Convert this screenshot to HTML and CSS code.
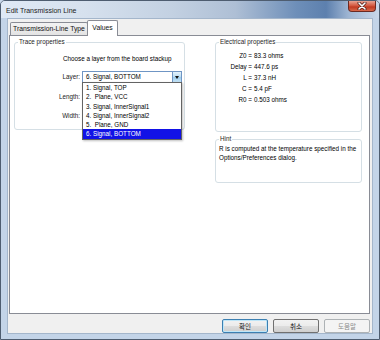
FILE: index.html
```html
<!DOCTYPE html>
<html lang="en">
<head>
  <meta charset="UTF-8" />
  <title>Edit Transmission Line</title>
  <link rel="stylesheet" href="styles.css">
</head>
<body>
  <div class="window">
    <div class="titlebar">
      <span class="title">Edit Transmission Line</span>
      <span class="close-btn">
        <svg width="10" height="8" viewBox="0 0 10 8">
          <path d="M2 1 L8 7 M8 1 L2 7" stroke="#4a1a14" stroke-width="3" stroke-linecap="round"/>
          <path d="M2 1 L8 7 M8 1 L2 7" stroke="#fff" stroke-width="1.6" stroke-linecap="round"/>
        </svg>
      </span>
    </div>

    <div class="client">
      <div class="tabs">
        <div class="tab">Transmission-Line Type</div>
        <div class="tab active">Values</div>
      </div>

      <div class="panel">
        <fieldset class="group trace">
          <legend>Trace properties</legend>
          <p class="choose">Choose a layer from the board stackup</p>
          <div class="fields">
            <label>Layer:</label>
            <div class="combo">
              <span class="combo-text">6. Signal, BOTTOM</span>
              <span class="combo-btn"></span>
              <!-- open dropdown list -->
              <ul class="combo-list">
                <li>1. Signal, TOP</li>
                <li>2.&nbsp; Plane, VCC</li>
                <li>3. Signal, InnerSignal1</li>
                <li>4. Signal, InnerSignal2</li>
                <li>5.&nbsp; Plane, GND</li>
                <li class="selected">6. Signal, BOTTOM</li>
              </ul>
            </div>
            <label>Length:</label>
            <div class="textbox"></div>
            <label>Width:</label>
            <div class="textbox"></div>
          </div>
        </fieldset>

        <div class="right-col">
          <fieldset class="group elec">
            <legend>Electrical properties</legend>
            <div class="props">
              <span class="k">Z0 =</span><span class="v">83.3 ohms</span>
              <span class="k">Delay =</span><span class="v">447.6 ps</span>
              <span class="k">L =</span><span class="v">37.3 nH</span>
              <span class="k">C =</span><span class="v">5.4 pF</span>
              <span class="k">R0 =</span><span class="v">0.503 ohms</span>
            </div>
          </fieldset>
          <fieldset class="group hint">
            <legend>Hint</legend>
            <p class="hint-text">R is computed at the temperature specified in the<br>Options/Preferences dialog.</p>
          </fieldset>
        </div>
      </div>

      <div class="buttons">
        <button class="btn default">확인</button>
        <button class="btn">취소</button>
        <button class="btn" disabled>도움말</button>
      </div>
    </div>
  </div>
</body>
</html>
```

FILE: styles.css
```css
body {
  margin: 0;
  padding: 0;
  width: 380px;
  height: 340px;
  overflow: hidden;
  background: #c8d7e9;
  font-family: "Liberation Sans", Arial, sans-serif;
  font-size: 6.3px;
  color: #000;
}
.window {
  width: 380px;
  height: 340px;
  box-sizing: border-box;
  border: 1px solid #4e5d70;
  border-radius: 5px 5px 0 0;
  background: #c3d4e8;
  display: flex;
  flex-direction: column;
}
/* Title bar */
.titlebar {
  height: 17px;
  flex: none;
  display: flex;
  justify-content: space-between;
  align-items: flex-start;
  padding: 0 3px 0 5px;
  background: linear-gradient(90deg, #dfe9f5 0%, #d6e1ee 22%, #c3d1e2 45%, #aebfd5 62%, #6e8fb9 78%, #5d80ae 86%, #9fb6d3 92%, #c9d8ea 100%);
  border-radius: 4px 4px 0 0;
}
.title {
  font-size: 7px;
  line-height: 9px;
  padding-top: 5px;
  color: #1b1b1b;
}
.close-btn {
  width: 28px;
  height: 11px;
  box-sizing: border-box;
  border: 1px solid #6b2a22;
  border-top: none;
  border-radius: 0 0 4px 4px;
  background: linear-gradient(#e8a493 0%, #d45b43 45%, #c13b22 60%, #d8694c 100%);
  display: flex;
  align-items: center;
  justify-content: center;
}
.close-btn svg { display: block; }

/* Client area */
.client {
  flex: 1;
  margin: 0 6px 5px 6px;
  border: 1px solid #a4b6cb;
  background: #f0f0f0;
  padding: 0 2px 0 1px;
  display: flex;
  flex-direction: column;
}
.tabs {
  height: 16px;
  flex: none;
  display: flex;
  align-items: flex-end;
  margin-left: 1px;
}
.tab {
  height: 13px;
  width: 78px;
  box-sizing: border-box;
  border: 1px solid #898c95;
  border-bottom: none;
  border-radius: 2px 2px 0 0;
  background: linear-gradient(#f3f3f3, #e3e3e3);
  font-size: 6.8px;
  line-height: 12px;
  text-align: center;
  color: #111;
}
.tab.active {
  width: 31px;
  height: 16px;
  margin-bottom: -1px;
  margin-left: -1px;
  background: #fff;
  line-height: 13px;
  position: relative;
  z-index: 1;
}
.panel {
  height: 279px;
  flex: none;
  box-sizing: border-box;
  border: 1px solid #898c95;
  background: #fff;
  padding: 2px 0 0 4px;
  display: flex;
  align-items: flex-start;
  gap: 30px;
}

/* Group boxes */
.group {
  margin: 0;
  padding: 0;
  box-sizing: border-box;
  border: 1px solid #d5dfe5;
  border-radius: 3px;
  min-inline-size: 0;
}
.group legend {
  padding: 0 1px;
  margin-left: 3px;
  line-height: 8px;
  color: #1e1e1e;
}
.trace {
  width: 171px;
  height: 92px;
}
.choose {
  margin: 9px 0 0 0;
  padding-left: 48px;
  line-height: 8px;
  white-space: nowrap;
}
.fields {
  display: grid;
  grid-template-columns: 65px 100px;
  grid-auto-rows: 12px;
  column-gap: 2px;
  row-gap: 7.5px;
  margin-top: 8px;
}
.fields label {
  text-align: right;
  line-height: 12px;
  color: #222;
}
.combo {
  position: relative;
  box-sizing: border-box;
  border: 1px solid #6f95c4;
  background: #fff;
  display: flex;
}
.combo-text {
  flex: 1;
  padding-left: 3px;
  line-height: 10px;
}
.combo-btn {
  width: 9px;
  box-sizing: border-box;
  border-left: 1px solid #6f95c4;
  background: linear-gradient(#e4f2fb, #b9dcf2 50%, #9cccec 51%, #c4e3f6);
  display: flex;
  align-items: center;
  justify-content: center;
}
.combo-btn::after {
  content: "";
  border-left: 2.5px solid transparent;
  border-right: 2.5px solid transparent;
  border-top: 3px solid #111;
}
.combo-list {
  position: absolute;
  top: 100%;
  left: -1px;
  width: 100px;
  box-sizing: border-box;
  margin: 0;
  padding: 0;
  list-style: none;
  border: 1px solid #646464;
  background: #fff;
  box-shadow: 1px 1px 2px rgba(0, 0, 0, 0.25);
  z-index: 5;
}
.combo-list li {
  line-height: 9.3px;
  padding-left: 3px;
  white-space: nowrap;
}
.combo-list li.selected {
  background: #1212e6;
  color: #fff;
}
.textbox {
  box-sizing: border-box;
  border: 1px solid #abadb3;
  background: #fff;
}

/* Right column */
.right-col {
  display: flex;
  flex-direction: column;
  gap: 3px;
}
.elec {
  width: 147px;
  height: 94px;
}
.props {
  display: grid;
  grid-template-columns: 36px auto;
  column-gap: 2px;
  margin-top: 3.5px;
  line-height: 11px;
}
.props .k { text-align: right; }
.hint {
  width: 147px;
  height: 48px;
}
.hint-text {
  margin: 0.5px 0 0 0;
  padding-left: 3px;
  line-height: 9px;
  white-space: nowrap;
}

/* Dialog buttons */
.buttons {
  display: flex;
  justify-content: flex-end;
  gap: 5px;
  margin-top: 5px;
  padding-right: 0;
}
.btn {
  width: 46px;
  height: 14px;
  margin: 0;
  padding: 0;
  box-sizing: border-box;
  border: 1px solid #707070;
  border-radius: 2px;
  background: linear-gradient(#f2f2f2 0%, #ebebeb 50%, #dddddd 51%, #cfcfcf 100%);
  font-family: "Noto Sans CJK KR", sans-serif;
  font-size: 6.5px;
  line-height: 12px;
  color: #111;
}
.btn.default {
  border-color: #3c7fb1;
  box-shadow: inset 0 0 0 1px #bfe6f8;
}
.btn:disabled {
  border-color: #adb2b5;
  background: #f4f4f4;
  color: #8a8a8a;
}
```
